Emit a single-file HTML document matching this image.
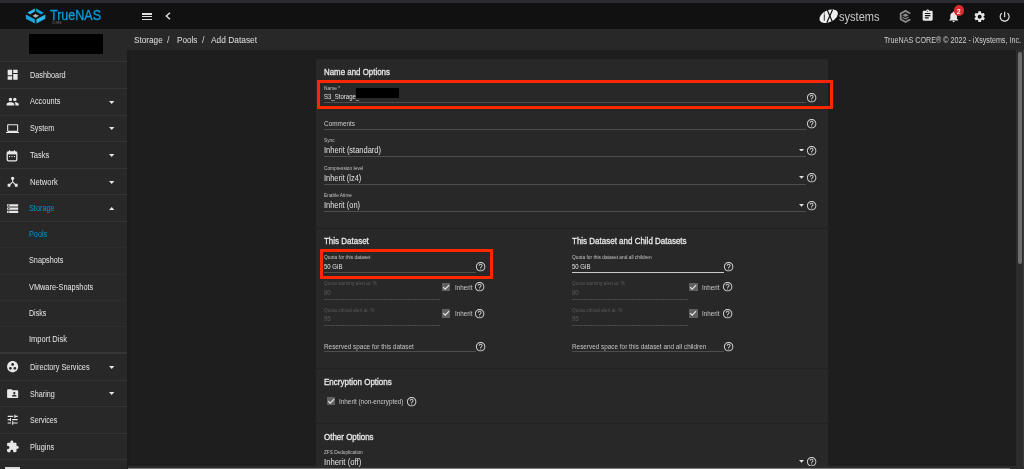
<!DOCTYPE html>
<html><head><meta charset="utf-8"><style>
html,body{margin:0;padding:0;width:1024px;height:469px;overflow:hidden;background:#1e1e1e;font-family:"Liberation Sans", sans-serif;}
</style></head><body>
<div style="position:relative;width:1024px;height:469px;overflow:hidden;will-change:transform">
<div style="position:absolute;left:0px;top:0px;width:1024px;height:469px;background:#1e1e1e;"></div>
<div style="position:absolute;left:0px;top:0px;width:1024px;height:2.6px;background:#2b2a33;"></div>
<div style="position:absolute;left:0px;top:2.6px;width:1024px;height:26.4px;background:#111111;"></div>
<div style="position:absolute;left:0px;top:29px;width:127px;height:440px;background:#282828;"></div>
<div style="position:absolute;left:127px;top:29px;width:897px;height:21px;background:#282828;"></div>
<svg style="position:absolute;left:24px;top:6px;" width="24" height="20" viewBox="0 0 24 20"><polygon fill="#31b7ea" points="3.4,6.6 10.9,2.6 10.9,5.5 6,8.5"/><polygon fill="#0ea0dc" points="12.1,2.6 19.8,6.8 17,8.5 12.1,5.5"/><polygon fill="#19a3df" points="1.9,8.5 10.9,13.2 10.9,17.5 1.9,12.8"/><polygon fill="#2bb6ee" points="12.4,13.2 21.3,8.5 21.3,12.8 12.4,17.5"/><polygon fill="#b0b0b0" points="8.5,9.8 11.5,7.9 15.1,9.8 11.5,11.7"/></svg>
<div style="position:absolute;left:142px;top:13.3px;width:10px;height:1.3px;background:#e0e0e0;"></div>
<div style="position:absolute;left:142px;top:16.0px;width:10px;height:1.3px;background:#e0e0e0;"></div>
<div style="position:absolute;left:142px;top:18.7px;width:10px;height:1.3px;background:#e0e0e0;"></div>
<svg style="position:absolute;left:164px;top:11px;" width="8" height="10" viewBox="0 0 8 10"><path d="M6 1.8 L2.3 5 L6 8.2" fill="none" stroke="#e0e0e0" stroke-width="1.4"/></svg>
<svg style="position:absolute;left:816px;top:6px;" width="30" height="20" viewBox="0 0 30 20"><ellipse cx="12.7" cy="10.2" rx="9.9" ry="5.9" transform="rotate(-25 12.7 10.2)" fill="#f0f0f0"/><line x1="8.3" y1="8.4" x2="8.3" y2="14.7" stroke="#111" stroke-width="0.9"/><rect x="7.85" y="6.6" width="0.9" height="0.9" fill="#111"/><line x1="11.3" y1="4.0" x2="16.3" y2="15.7" stroke="#111" stroke-width="1.2"/><line x1="16.5" y1="3.7" x2="10.9" y2="16.6" stroke="#111" stroke-width="1.2"/></svg>
<svg style="position:absolute;left:899px;top:9px;" width="15" height="15" viewBox="0 0 15 15"><path d="M6.5 0.8 L12 3.9 L10.3 5 L6.5 2.9 L2.6 5.1 V9.7 L6.5 11.9 L10.3 9.8 L12 10.9 L6.5 14 L0.8 10.8 V4 Z" fill="#8c8c8c"/><path d="M6.5 4.6 L9.6 6.3 L6.5 8 L3.4 6.3 Z M3.4 7.6 L6.5 9.3 L9.6 7.6 L9.6 8.8 L6.5 10.5 L3.4 8.8Z" fill="#8c8c8c"/></svg>
<svg style="position:absolute;left:921.35px;top:9.35px;" width="13.3" height="13.3" viewBox="0 0 24 24"><path fill="#e8e8e8" d="M19 3h-4.18C14.4 1.84 13.3 1 12 1c-1.3 0-2.4.84-2.82 2H5c-1.1 0-2 .9-2 2v14c0 1.1.9 2 2 2h14c1.1 0 2-.9 2-2V5c0-1.1-.9-2-2-2zm-7 0c.55 0 1 .45 1 1s-.45 1-1 1-1-.45-1-1 .45-1 1-1zm2 14H7v-2h7v2zm3-4H7v-2h10v2zm0-4H7V7h10v2z"/></svg>
<svg style="position:absolute;left:946.85px;top:9.85px;" width="13.3" height="13.3" viewBox="0 0 24 24"><path fill="#e8e8e8" d="M12 22c1.1 0 2-.9 2-2h-4c0 1.1.89 2 2 2zm6-6v-5c0-3.07-1.64-5.64-4.5-6.32V4c0-.83-.67-1.5-1.5-1.5s-1.5.67-1.5 1.5v.68C7.63 5.36 6 7.92 6 11v5l-2 2v1h16v-1l-2-2z"/></svg>
<div style="position:absolute;left:953.7px;top:5.2px;width:10.5px;height:10.5px;border-radius:50%;background:#d32f2f"></div>
<svg style="position:absolute;left:972.5500000000001px;top:10.15px;" width="13.3" height="13.3" viewBox="0 0 24 24"><path fill="#e8e8e8" d="M19.14 12.94c.04-.3.06-.61.06-.94 0-.32-.02-.64-.07-.94l2.03-1.58c.18-.14.23-.41.12-.61l-1.92-3.32c-.12-.22-.37-.29-.59-.22l-2.39.96c-.5-.38-1.03-.7-1.62-.94l-.36-2.54c-.04-.24-.24-.41-.48-.41h-3.84c-.24 0-.43.17-.47.41l-.36 2.54c-.59.24-1.13.57-1.62.94l-2.39-.96c-.22-.08-.47 0-.59.22L2.74 8.87c-.12.21-.08.47.12.61l2.03 1.58c-.05.3-.09.63-.09.94s.02.64.07.94l-2.03 1.58c-.18.14-.23.41-.12.61l1.92 3.32c.12.22.37.29.59.22l2.39-.96c.5.38 1.030.7 1.62.94l.36 2.54c.05.24.24.41.48.41h3.84c.24 0 .44-.17.47-.41l.36-2.54c.59-.24 1.13-.56 1.62-.94l2.39.96c.22.08.47 0 .59-.22l1.92-3.32c.12-.22.07-.47-.12-.61l-2.01-1.58zM12 15.6c-1.98 0-3.6-1.62-3.6-3.6s1.62-3.6 3.6-3.6 3.6 1.62 3.6 3.6-1.62 3.6-3.6 3.6z"/></svg>
<svg style="position:absolute;left:998.15px;top:10.049999999999999px;" width="13.3" height="13.3" viewBox="0 0 24 24"><path fill="#e8e8e8" d="M13 3h-2v10h2V3zm4.83 2.17l-1.42 1.42C17.99 7.86 19 9.81 19 12c0 3.87-3.13 7-7 7s-7-3.13-7-7c0-2.19 1.01-4.14 2.58-5.42L6.17 5.17C4.23 6.82 3 9.26 3 12c0 4.97 4.03 9 9 9s9-4.03 9-9c0-2.74-1.23-5.18-3.17-6.83z"/></svg>
<div style="position:absolute;left:29.3px;top:33.8px;width:74.2px;height:20px;background:#000000;"></div>
<div style="position:absolute;left:0px;top:61.2px;width:127px;height:1px;background:#333333;"></div>
<div style="position:absolute;left:0px;top:87.8px;width:127px;height:1px;background:#333333;"></div>
<div style="position:absolute;left:0px;top:114.5px;width:127px;height:1px;background:#333333;"></div>
<div style="position:absolute;left:0px;top:141.1px;width:127px;height:1px;background:#333333;"></div>
<div style="position:absolute;left:0px;top:167.7px;width:127px;height:1px;background:#333333;"></div>
<div style="position:absolute;left:0px;top:194.4px;width:127px;height:1px;background:#333333;"></div>
<div style="position:absolute;left:0px;top:221.0px;width:127px;height:1px;background:#333333;"></div>
<div style="position:absolute;left:0px;top:247.2px;width:127px;height:1px;background:#2d2d2d;"></div>
<div style="position:absolute;left:0px;top:273.6px;width:127px;height:1px;background:#2d2d2d;"></div>
<div style="position:absolute;left:0px;top:299.5px;width:127px;height:1px;background:#2d2d2d;"></div>
<div style="position:absolute;left:0px;top:326.0px;width:127px;height:1px;background:#2d2d2d;"></div>
<div style="position:absolute;left:0px;top:352.2px;width:127px;height:2px;background:#363636;"></div>
<div style="position:absolute;left:0px;top:379.5px;width:127px;height:1px;background:#333333;"></div>
<div style="position:absolute;left:0px;top:406.3px;width:127px;height:1px;background:#333333;"></div>
<div style="position:absolute;left:0px;top:432.7px;width:127px;height:1px;background:#333333;"></div>
<div style="position:absolute;left:0px;top:459.2px;width:127px;height:1px;background:#333333;"></div>
<div style="position:absolute;left:127px;top:50px;width:1.5px;height:419px;background:#1b1b1b;"></div>
<svg style="position:absolute;left:5.549999999999999px;top:68.35px;" width="13.3" height="13.3" viewBox="0 0 24 24"><path fill="#e8e8e8" d="M3 13h8V3H3v10zm0 8h8v-6H3v6zm10 0h8V11h-8v10zm0-18v6h8V3h-8z"/></svg>
<svg style="position:absolute;left:5.549999999999999px;top:95.05px;" width="13.3" height="13.3" viewBox="0 0 24 24"><path fill="#e8e8e8" d="M16 11c1.66 0 2.99-1.34 2.99-3S17.66 5 16 5c-1.66 0-3 1.34-3 3s1.34 3 3 3zm-8 0c1.66 0 2.99-1.34 2.99-3S9.66 5 8 5C6.34 5 5 6.34 5 8s1.34 3 3 3zm0 2c-2.33 0-7 1.17-7 3.5V19h14v-2.5c0-2.33-4.67-3.5-7-3.5zm8 0c-.29 0-.62.02-.97.05 1.16.84 1.97 1.97 1.97 3.45V19h6v-2.5c0-2.33-4.67-3.5-7-3.5z"/></svg>
<svg style="position:absolute;left:109.4px;top:100.60000000000001px;" width="5.4" height="3" viewBox="0 0 5.4 3"><polygon points="0,0 5.4,0 2.7,3" fill="#e6e6e6"/></svg>
<svg style="position:absolute;left:5.549999999999999px;top:121.65px;" width="13.3" height="13.3" viewBox="0 0 24 24"><path fill="#e8e8e8" d="M20 18c1.1 0 1.99-.9 1.99-2L22 6c0-1.1-.9-2-2-2H4c-1.1 0-2 .9-2 2v10c0 1.1.9 2 2 2H0v2h24v-2h-4zM4 6h16v10H4V6z"/></svg>
<svg style="position:absolute;left:109.4px;top:127.20000000000002px;" width="5.4" height="3" viewBox="0 0 5.4 3"><polygon points="0,0 5.4,0 2.7,3" fill="#e6e6e6"/></svg>
<svg style="position:absolute;left:109.4px;top:153.9px;" width="5.4" height="3" viewBox="0 0 5.4 3"><polygon points="0,0 5.4,0 2.7,3" fill="#e6e6e6"/></svg>
<svg style="position:absolute;left:5.549999999999999px;top:174.95px;" width="13.3" height="13.3" viewBox="0 0 24 24"><path fill="#e8e8e8" d="M17 16l-4-4V8.82C14.16 8.4 15 7.3 15 6c0-1.66-1.34-3-3-3S9 4.34 9 6c0 1.3.84 2.4 2 2.82V12l-4 4H3v5h5v-3.05l4-4.2 4 4.2V21h5v-5h-4z"/></svg>
<svg style="position:absolute;left:109.4px;top:180.5px;" width="5.4" height="3" viewBox="0 0 5.4 3"><polygon points="0,0 5.4,0 2.7,3" fill="#e6e6e6"/></svg>
<svg style="position:absolute;left:5.549999999999999px;top:360.15000000000003px;" width="13.3" height="13.3" viewBox="0 0 24 24"><path fill="#e8e8e8" d="M12 2C6.48 2 2 6.48 2 12s4.48 10 10 10 10-4.48 10-10S17.52 2 12 2zM8 17.5c-1.38 0-2.5-1.12-2.5-2.5s1.12-2.5 2.5-2.5 2.5 1.12 2.5 2.5-1.12 2.5-2.5 2.5zM9.5 8c0-1.38 1.12-2.5 2.5-2.5s2.5 1.12 2.5 2.5-1.12 2.5-2.5 2.5S9.5 9.38 9.5 8zm6.5 9.5c-1.38 0-2.5-1.12-2.5-2.5s1.12-2.5 2.5-2.5 2.5 1.12 2.5 2.5-1.12 2.5-2.5 2.5z"/></svg>
<svg style="position:absolute;left:109.4px;top:365.7px;" width="5.4" height="3" viewBox="0 0 5.4 3"><polygon points="0,0 5.4,0 2.7,3" fill="#e6e6e6"/></svg>
<svg style="position:absolute;left:5.549999999999999px;top:386.75px;" width="13.3" height="13.3" viewBox="0 0 24 24"><path fill="#e8e8e8" d="M20 6h-8l-2-2H4c-1.1 0-1.99.9-1.99 2L2 18c0 1.1.9 2 2 2h16c1.1 0 2-.9 2-2V8c0-1.1-.9-2-2-2zm-5 3c1.1 0 2 .9 2 2s-.9 2-2 2-2-.9-2-2 .9-2 2-2zm4 8h-8v-1c0-1.33 2.67-2 4-2s4 .67 4 2v1z"/></svg>
<svg style="position:absolute;left:109.4px;top:392.29999999999995px;" width="5.4" height="3" viewBox="0 0 5.4 3"><polygon points="0,0 5.4,0 2.7,3" fill="#e6e6e6"/></svg>
<svg style="position:absolute;left:5.549999999999999px;top:413.35px;" width="13.3" height="13.3" viewBox="0 0 24 24"><path fill="#e8e8e8" d="M3 17v2h6v-2H3zM3 5v2h10V5H3zm10 16v-2h8v-2h-8v-2h-2v6h2zM7 9v2H3v2h4v2h2V9H7zm14 4v-2H11v2h10zm-6-4h2V7h4V5h-4V3h-2v6z"/></svg>
<svg style="position:absolute;left:5.549999999999999px;top:439.95000000000005px;" width="13.3" height="13.3" viewBox="0 0 24 24"><path fill="#e8e8e8" d="M20.5 11H19V7c0-1.1-.9-2-2-2h-4V3.5C13 2.12 11.88 1 10.5 1S8 2.12 8 3.5V5H4c-1.1 0-1.99.9-1.99 2v3.8H3.5c1.49 0 2.7 1.21 2.7 2.7s-1.21 2.7-2.7 2.7H2V20c0 1.1.9 2 2 2h3.8v-1.5c0-1.49 1.21-2.7 2.7-2.7 1.49 0 2.7 1.21 2.7 2.7V22H17c1.1 0 2-.9 2-2v-4h1.5c1.38 0 2.5-1.12 2.5-2.5S21.88 11 20.5 11z"/></svg>
<svg style="position:absolute;left:6px;top:149.5px;" width="12" height="12" viewBox="0 0 12 12"><rect x="1.2" y="1.8" width="9.6" height="9" rx="1.4" fill="none" stroke="#e8e8e8" stroke-width="1.3"/><rect x="1.2" y="1.8" width="9.6" height="2.6" fill="#e8e8e8"/><rect x="3" y="0.3" width="1.2" height="2" fill="#e8e8e8"/><rect x="7.8" y="0.3" width="1.2" height="2" fill="#e8e8e8"/><rect x="3" y="6" width="1.1" height="1.1" fill="#e8e8e8"/><rect x="5.45" y="6" width="1.1" height="1.1" fill="#e8e8e8"/><rect x="7.9" y="6" width="1.1" height="1.1" fill="#e8e8e8"/></svg>
<svg style="position:absolute;left:5.65px;top:201.75px;" width="13.3" height="13.3" viewBox="0 0 24 24"><path fill="#e8e8e8" d="M2 20h20v-4H2v4zm2-3h2v2H4v-2zM2 4v4h20V4H2zm4 3H4V5h2v2zm-4 7h20v-4H2v4zm2-3h2v2H4v-2z"/></svg>
<svg style="position:absolute;left:109.4px;top:207.1px;" width="5.4" height="3" viewBox="0 0 5.4 3"><polygon points="0,3 2.7,0 5.4,3" fill="#e6e6e6"/></svg>
<div style="position:absolute;left:5px;top:467px;width:15px;height:2px;background:#d8d8d8;"></div>
<div style="position:absolute;left:316px;top:59px;width:512px;height:420px;background:#282828;border-radius:2px"></div>
<div style="position:absolute;left:316px;top:228.0px;width:512px;height:1px;background:#222222;"></div>
<div style="position:absolute;left:316px;top:367.8px;width:512px;height:1px;background:#222222;"></div>
<div style="position:absolute;left:316px;top:422.9px;width:512px;height:1px;background:#222222;"></div>
<div style="position:absolute;left:317px;top:80px;width:510px;height:23px;border:3px solid #ff2600"></div>
<div style="position:absolute;left:356px;top:88px;width:42.5px;height:9.8px;background:#000000;"></div>
<div style="position:absolute;left:324px;top:101.8px;width:482px;height:1px;background:#4e4e4e;"></div>
<svg style="position:absolute;left:805.85px;top:91.85px;" width="11.3" height="11.3" viewBox="0 0 24 24"><path fill="#cfcfcf" d="M11 18h2v-2h-2v2zm1-16C6.48 2 2 6.48 2 12s4.48 10 10 10 10-4.48 10-10S17.52 2 12 2zm0 18c-4.41 0-8-3.59-8-8s3.59-8 8-8 8 3.59 8 8-3.59 8-8 8zm0-14c-2.21 0-4 1.79-4 4h2c0-1.1.9-2 2-2s2 .9 2 2c0 2-3 1.75-3 5h2c0-2.25 3-2.5 3-5 0-2.21-1.79-4-4-4z"/></svg>
<div style="position:absolute;left:324px;top:128.9px;width:482px;height:1px;background:#4e4e4e;"></div>
<svg style="position:absolute;left:805.85px;top:118.35px;" width="11.3" height="11.3" viewBox="0 0 24 24"><path fill="#cfcfcf" d="M11 18h2v-2h-2v2zm1-16C6.48 2 2 6.48 2 12s4.48 10 10 10 10-4.48 10-10S17.52 2 12 2zm0 18c-4.41 0-8-3.59-8-8s3.59-8 8-8 8 3.59 8 8-3.59 8-8 8zm0-14c-2.21 0-4 1.79-4 4h2c0-1.1.9-2 2-2s2 .9 2 2c0 2-3 1.75-3 5h2c0-2.25 3-2.5 3-5 0-2.21-1.79-4-4-4z"/></svg>
<div style="position:absolute;left:324px;top:156.2px;width:482px;height:1px;background:#4e4e4e;"></div>
<svg style="position:absolute;left:798.9px;top:148.7px;" width="5" height="2.8" viewBox="0 0 5 2.8"><polygon points="0,0 5,0 2.5,2.8" fill="#e0e0e0"/></svg>
<svg style="position:absolute;left:805.75px;top:144.75px;" width="11.3" height="11.3" viewBox="0 0 24 24"><path fill="#cfcfcf" d="M11 18h2v-2h-2v2zm1-16C6.48 2 2 6.48 2 12s4.48 10 10 10 10-4.48 10-10S17.52 2 12 2zm0 18c-4.41 0-8-3.59-8-8s3.59-8 8-8 8 3.59 8 8-3.59 8-8 8zm0-14c-2.21 0-4 1.79-4 4h2c0-1.1.9-2 2-2s2 .9 2 2c0 2-3 1.75-3 5h2c0-2.25 3-2.5 3-5 0-2.21-1.79-4-4-4z"/></svg>
<div style="position:absolute;left:324px;top:183.8px;width:482px;height:1px;background:#4e4e4e;"></div>
<svg style="position:absolute;left:798.9px;top:176.29999999999998px;" width="5" height="2.8" viewBox="0 0 5 2.8"><polygon points="0,0 5,0 2.5,2.8" fill="#e0e0e0"/></svg>
<svg style="position:absolute;left:805.75px;top:172.35px;" width="11.3" height="11.3" viewBox="0 0 24 24"><path fill="#cfcfcf" d="M11 18h2v-2h-2v2zm1-16C6.48 2 2 6.48 2 12s4.48 10 10 10 10-4.48 10-10S17.52 2 12 2zm0 18c-4.41 0-8-3.59-8-8s3.59-8 8-8 8 3.59 8 8-3.59 8-8 8zm0-14c-2.21 0-4 1.79-4 4h2c0-1.1.9-2 2-2s2 .9 2 2c0 2-3 1.75-3 5h2c0-2.25 3-2.5 3-5 0-2.21-1.79-4-4-4z"/></svg>
<div style="position:absolute;left:324px;top:211.0px;width:482px;height:1px;background:#4e4e4e;"></div>
<svg style="position:absolute;left:798.9px;top:204.1px;" width="5" height="2.8" viewBox="0 0 5 2.8"><polygon points="0,0 5,0 2.5,2.8" fill="#e0e0e0"/></svg>
<svg style="position:absolute;left:805.75px;top:200.15px;" width="11.3" height="11.3" viewBox="0 0 24 24"><path fill="#cfcfcf" d="M11 18h2v-2h-2v2zm1-16C6.48 2 2 6.48 2 12s4.48 10 10 10 10-4.48 10-10S17.52 2 12 2zm0 18c-4.41 0-8-3.59-8-8s3.59-8 8-8 8 3.59 8 8-3.59 8-8 8zm0-14c-2.21 0-4 1.79-4 4h2c0-1.1.9-2 2-2s2 .9 2 2c0 2-3 1.75-3 5h2c0-2.25 3-2.5 3-5 0-2.21-1.79-4-4-4z"/></svg>
<div style="position:absolute;left:320px;top:249px;width:167px;height:24px;border:3px solid #ff2600"></div>
<div style="position:absolute;left:324.0px;top:271.9px;width:151.60000000000002px;height:1px;background:#4e4e4e;"></div>
<svg style="position:absolute;left:475.35px;top:261.45000000000005px;" width="11.3" height="11.3" viewBox="0 0 24 24"><path fill="#cfcfcf" d="M11 18h2v-2h-2v2zm1-16C6.48 2 2 6.48 2 12s4.48 10 10 10 10-4.48 10-10S17.52 2 12 2zm0 18c-4.41 0-8-3.59-8-8s3.59-8 8-8 8 3.59 8 8-3.59 8-8 8zm0-14c-2.21 0-4 1.79-4 4h2c0-1.1.9-2 2-2s2 .9 2 2c0 2-3 1.75-3 5h2c0-2.25 3-2.5 3-5 0-2.21-1.79-4-4-4z"/></svg>
<div style="position:absolute;left:324.0px;top:298.5px;width:116.0px;height:1px;background:repeating-linear-gradient(90deg,#4a4a4a 0 2px,#383838 2px 3px)"></div>
<div style="position:absolute;left:442px;top:283px;width:8.3px;height:8.3px;background:#606060"></div>
<svg style="position:absolute;left:442px;top:283px;" width="8.3" height="8.3" viewBox="0 0 8.3 8.3"><path d="M1.2 4.1 L3.2 6.1 L7.1 2.2" fill="none" stroke="#e8e8e8" stroke-width="1.15"/></svg>
<svg style="position:absolute;left:474.35px;top:281.35px;" width="11.3" height="11.3" viewBox="0 0 24 24"><path fill="#cfcfcf" d="M11 18h2v-2h-2v2zm1-16C6.48 2 2 6.48 2 12s4.48 10 10 10 10-4.48 10-10S17.52 2 12 2zm0 18c-4.41 0-8-3.59-8-8s3.59-8 8-8 8 3.59 8 8-3.59 8-8 8zm0-14c-2.21 0-4 1.79-4 4h2c0-1.1.9-2 2-2s2 .9 2 2c0 2-3 1.75-3 5h2c0-2.25 3-2.5 3-5 0-2.21-1.79-4-4-4z"/></svg>
<div style="position:absolute;left:324.0px;top:325.0px;width:116.0px;height:1px;background:repeating-linear-gradient(90deg,#4a4a4a 0 2px,#383838 2px 3px)"></div>
<div style="position:absolute;left:442px;top:309.3px;width:8.3px;height:8.3px;background:#606060"></div>
<svg style="position:absolute;left:442px;top:309.3px;" width="8.3" height="8.3" viewBox="0 0 8.3 8.3"><path d="M1.2 4.1 L3.2 6.1 L7.1 2.2" fill="none" stroke="#e8e8e8" stroke-width="1.15"/></svg>
<svg style="position:absolute;left:474.35px;top:307.85px;" width="11.3" height="11.3" viewBox="0 0 24 24"><path fill="#cfcfcf" d="M11 18h2v-2h-2v2zm1-16C6.48 2 2 6.48 2 12s4.48 10 10 10 10-4.48 10-10S17.52 2 12 2zm0 18c-4.41 0-8-3.59-8-8s3.59-8 8-8 8 3.59 8 8-3.59 8-8 8zm0-14c-2.21 0-4 1.79-4 4h2c0-1.1.9-2 2-2s2 .9 2 2c0 2-3 1.75-3 5h2c0-2.25 3-2.5 3-5 0-2.21-1.79-4-4-4z"/></svg>
<div style="position:absolute;left:572.0px;top:271.75px;width:151.60000000000002px;height:1.3px;background:#c8c8c8;"></div>
<svg style="position:absolute;left:722.75px;top:261.45000000000005px;" width="11.3" height="11.3" viewBox="0 0 24 24"><path fill="#cfcfcf" d="M11 18h2v-2h-2v2zm1-16C6.48 2 2 6.48 2 12s4.48 10 10 10 10-4.48 10-10S17.52 2 12 2zm0 18c-4.41 0-8-3.59-8-8s3.59-8 8-8 8 3.59 8 8-3.59 8-8 8zm0-14c-2.21 0-4 1.79-4 4h2c0-1.1.9-2 2-2s2 .9 2 2c0 2-3 1.75-3 5h2c0-2.25 3-2.5 3-5 0-2.21-1.79-4-4-4z"/></svg>
<div style="position:absolute;left:572.0px;top:298.5px;width:116.0px;height:1px;background:repeating-linear-gradient(90deg,#4a4a4a 0 2px,#383838 2px 3px)"></div>
<div style="position:absolute;left:689.4px;top:283px;width:8.3px;height:8.3px;background:#606060"></div>
<svg style="position:absolute;left:689.4px;top:283px;" width="8.3" height="8.3" viewBox="0 0 8.3 8.3"><path d="M1.2 4.1 L3.2 6.1 L7.1 2.2" fill="none" stroke="#e8e8e8" stroke-width="1.15"/></svg>
<svg style="position:absolute;left:721.75px;top:281.35px;" width="11.3" height="11.3" viewBox="0 0 24 24"><path fill="#cfcfcf" d="M11 18h2v-2h-2v2zm1-16C6.48 2 2 6.48 2 12s4.48 10 10 10 10-4.48 10-10S17.52 2 12 2zm0 18c-4.41 0-8-3.59-8-8s3.59-8 8-8 8 3.59 8 8-3.59 8-8 8zm0-14c-2.21 0-4 1.79-4 4h2c0-1.1.9-2 2-2s2 .9 2 2c0 2-3 1.75-3 5h2c0-2.25 3-2.5 3-5 0-2.21-1.79-4-4-4z"/></svg>
<div style="position:absolute;left:572.0px;top:325.0px;width:116.0px;height:1px;background:repeating-linear-gradient(90deg,#4a4a4a 0 2px,#383838 2px 3px)"></div>
<div style="position:absolute;left:689.4px;top:309.3px;width:8.3px;height:8.3px;background:#606060"></div>
<svg style="position:absolute;left:689.4px;top:309.3px;" width="8.3" height="8.3" viewBox="0 0 8.3 8.3"><path d="M1.2 4.1 L3.2 6.1 L7.1 2.2" fill="none" stroke="#e8e8e8" stroke-width="1.15"/></svg>
<svg style="position:absolute;left:721.75px;top:307.85px;" width="11.3" height="11.3" viewBox="0 0 24 24"><path fill="#cfcfcf" d="M11 18h2v-2h-2v2zm1-16C6.48 2 2 6.48 2 12s4.48 10 10 10 10-4.48 10-10S17.52 2 12 2zm0 18c-4.41 0-8-3.59-8-8s3.59-8 8-8 8 3.59 8 8-3.59 8-8 8zm0-14c-2.21 0-4 1.79-4 4h2c0-1.1.9-2 2-2s2 .9 2 2c0 2-3 1.75-3 5h2c0-2.25 3-2.5 3-5 0-2.21-1.79-4-4-4z"/></svg>
<div style="position:absolute;left:324px;top:351.4px;width:151.5px;height:1px;background:#4e4e4e;"></div>
<svg style="position:absolute;left:475.35px;top:341.35px;" width="11.3" height="11.3" viewBox="0 0 24 24"><path fill="#cfcfcf" d="M11 18h2v-2h-2v2zm1-16C6.48 2 2 6.48 2 12s4.48 10 10 10 10-4.48 10-10S17.52 2 12 2zm0 18c-4.41 0-8-3.59-8-8s3.59-8 8-8 8 3.59 8 8-3.59 8-8 8zm0-14c-2.21 0-4 1.79-4 4h2c0-1.1.9-2 2-2s2 .9 2 2c0 2-3 1.75-3 5h2c0-2.25 3-2.5 3-5 0-2.21-1.79-4-4-4z"/></svg>
<div style="position:absolute;left:572px;top:351.4px;width:151.5px;height:1px;background:#4e4e4e;"></div>
<svg style="position:absolute;left:722.95px;top:341.35px;" width="11.3" height="11.3" viewBox="0 0 24 24"><path fill="#cfcfcf" d="M11 18h2v-2h-2v2zm1-16C6.48 2 2 6.48 2 12s4.48 10 10 10 10-4.48 10-10S17.52 2 12 2zm0 18c-4.41 0-8-3.59-8-8s3.59-8 8-8 8 3.59 8 8-3.59 8-8 8zm0-14c-2.21 0-4 1.79-4 4h2c0-1.1.9-2 2-2s2 .9 2 2c0 2-3 1.75-3 5h2c0-2.25 3-2.5 3-5 0-2.21-1.79-4-4-4z"/></svg>
<div style="position:absolute;left:326.7px;top:397.2px;width:8.3px;height:8.3px;background:#606060"></div>
<svg style="position:absolute;left:326.7px;top:397.2px;" width="8.3" height="8.3" viewBox="0 0 8.3 8.3"><path d="M1.2 4.1 L3.2 6.1 L7.1 2.2" fill="none" stroke="#e8e8e8" stroke-width="1.15"/></svg>
<svg style="position:absolute;left:405.85px;top:395.85px;" width="11.3" height="11.3" viewBox="0 0 24 24"><path fill="#cfcfcf" d="M11 18h2v-2h-2v2zm1-16C6.48 2 2 6.48 2 12s4.48 10 10 10 10-4.48 10-10S17.52 2 12 2zm0 18c-4.41 0-8-3.59-8-8s3.59-8 8-8 8 3.59 8 8-3.59 8-8 8zm0-14c-2.21 0-4 1.79-4 4h2c0-1.1.9-2 2-2s2 .9 2 2c0 2-3 1.75-3 5h2c0-2.25 3-2.5 3-5 0-2.21-1.79-4-4-4z"/></svg>
<svg style="position:absolute;left:798.9px;top:460.0px;" width="5" height="2.8" viewBox="0 0 5 2.8"><polygon points="0,0 5,0 2.5,2.8" fill="#e0e0e0"/></svg>
<svg style="position:absolute;left:805.75px;top:456.15000000000003px;" width="11.3" height="11.3" viewBox="0 0 24 24"><path fill="#cfcfcf" d="M11 18h2v-2h-2v2zm1-16C6.48 2 2 6.48 2 12s4.48 10 10 10 10-4.48 10-10S17.52 2 12 2zm0 18c-4.41 0-8-3.59-8-8s3.59-8 8-8 8 3.59 8 8-3.59 8-8 8zm0-14c-2.21 0-4 1.79-4 4h2c0-1.1.9-2 2-2s2 .9 2 2c0 2-3 1.75-3 5h2c0-2.25 3-2.5 3-5 0-2.21-1.79-4-4-4z"/></svg>
<div style="position:absolute;left:1016px;top:50px;width:8px;height:416px;background:#2c2c2c;"></div>
<div style="position:absolute;left:1023px;top:50px;width:1px;height:416px;background:#3a3a3a;"></div>
<div style="position:absolute;left:1018px;top:52px;width:4.3px;height:212px;border-radius:2.2px;background:#6e6e6e"></div>
<div style="position:absolute;left:128px;top:465.6px;width:896px;height:3.4px;background:#2c2c2c;"></div>
<div style="position:absolute;left:128px;top:467.6px;width:882px;height:1.4px;background:#7a7a7a;"></div>
<div style="position:absolute;left:50px;top:6.72px;font-size:15.1px;line-height:15.1px;font-weight:400;color:#0b98d6;white-space:pre;transform:scaleX(0.8291);transform-origin:0 0;-webkit-text-stroke:0.35px #0b98d6;">TrueNAS</div>
<div style="position:absolute;left:52px;top:21.65px;font-size:3.6px;line-height:3.6px;font-weight:400;color:#7a7a7a;white-space:pre;transform:scaleX(0.9335);transform-origin:0 0;">CORE</div>
<div style="position:absolute;left:838.5px;top:10.89px;font-size:12.3px;line-height:12.3px;font-weight:400;color:#c8c8c8;white-space:pre;transform:scaleX(0.8981);transform-origin:0 0;">systems</div>
<div style="position:absolute;left:956.8px;top:7.97px;font-size:7px;line-height:7px;font-weight:700;color:#ffffff;white-space:pre;">2</div>
<div style="position:absolute;left:133.5px;top:35.80px;font-size:9.1px;line-height:9.1px;font-weight:400;color:#e0e0e0;white-space:pre;transform:scaleX(0.9008);transform-origin:0 0;">Storage</div>
<div style="position:absolute;left:167px;top:35.80px;font-size:9.1px;line-height:9.1px;font-weight:400;color:#cfcfcf;white-space:pre;">/</div>
<div style="position:absolute;left:176.6px;top:35.80px;font-size:9.1px;line-height:9.1px;font-weight:400;color:#e0e0e0;white-space:pre;transform:scaleX(0.8967);transform-origin:0 0;">Pools</div>
<div style="position:absolute;left:202px;top:35.80px;font-size:9.1px;line-height:9.1px;font-weight:400;color:#cfcfcf;white-space:pre;">/</div>
<div style="position:absolute;left:211.2px;top:35.80px;font-size:9.1px;line-height:9.1px;font-weight:400;color:#e0e0e0;white-space:pre;transform:scaleX(0.9211);transform-origin:0 0;">Add Dataset</div>
<div style="position:absolute;left:884px;top:35.99px;font-size:8.4px;line-height:8.4px;font-weight:400;color:#d0d0d0;white-space:pre;transform:scaleX(0.8560);transform-origin:0 0;">TrueNAS CORE® © 2022 - iXsystems, Inc.</div>
<div style="position:absolute;left:29.7px;top:70.67px;font-size:8.3px;line-height:8.3px;font-weight:400;color:#e6e6e6;white-space:pre;transform:scaleX(0.8770);transform-origin:0 0;">Dashboard</div>
<div style="position:absolute;left:29.7px;top:97.27px;font-size:8.3px;line-height:8.3px;font-weight:400;color:#e6e6e6;white-space:pre;transform:scaleX(0.8904);transform-origin:0 0;">Accounts</div>
<div style="position:absolute;left:29.7px;top:124.17px;font-size:8.3px;line-height:8.3px;font-weight:400;color:#e6e6e6;white-space:pre;transform:scaleX(0.8781);transform-origin:0 0;">System</div>
<div style="position:absolute;left:29.7px;top:150.67px;font-size:8.3px;line-height:8.3px;font-weight:400;color:#e6e6e6;white-space:pre;transform:scaleX(0.9049);transform-origin:0 0;">Tasks</div>
<div style="position:absolute;left:29.7px;top:177.67px;font-size:8.3px;line-height:8.3px;font-weight:400;color:#e6e6e6;white-space:pre;transform:scaleX(0.9133);transform-origin:0 0;">Network</div>
<div style="position:absolute;left:29.7px;top:362.67px;font-size:8.3px;line-height:8.3px;font-weight:400;color:#e6e6e6;white-space:pre;transform:scaleX(0.8854);transform-origin:0 0;">Directory Services</div>
<div style="position:absolute;left:29.7px;top:389.67px;font-size:8.3px;line-height:8.3px;font-weight:400;color:#e6e6e6;white-space:pre;transform:scaleX(0.8703);transform-origin:0 0;">Sharing</div>
<div style="position:absolute;left:29.7px;top:416.07px;font-size:8.3px;line-height:8.3px;font-weight:400;color:#e6e6e6;white-space:pre;transform:scaleX(0.8609);transform-origin:0 0;">Services</div>
<div style="position:absolute;left:29.7px;top:442.57px;font-size:8.3px;line-height:8.3px;font-weight:400;color:#e6e6e6;white-space:pre;transform:scaleX(0.8928);transform-origin:0 0;">Plugins</div>
<div style="position:absolute;left:29.4px;top:204.17px;font-size:8.3px;line-height:8.3px;font-weight:400;color:#0095d5;white-space:pre;transform:scaleX(0.8809);transform-origin:0 0;">Storage</div>
<div style="position:absolute;left:28.7px;top:230.17px;font-size:8.3px;line-height:8.3px;font-weight:400;color:#0095d5;white-space:pre;transform:scaleX(0.8764);transform-origin:0 0;">Pools</div>
<div style="position:absolute;left:28.7px;top:256.17px;font-size:8.3px;line-height:8.3px;font-weight:400;color:#e6e6e6;white-space:pre;transform:scaleX(0.8771);transform-origin:0 0;">Snapshots</div>
<div style="position:absolute;left:28.7px;top:282.67px;font-size:8.3px;line-height:8.3px;font-weight:400;color:#e6e6e6;white-space:pre;transform:scaleX(0.8880);transform-origin:0 0;">VMware-Snapshots</div>
<div style="position:absolute;left:28.7px;top:308.57px;font-size:8.3px;line-height:8.3px;font-weight:400;color:#e6e6e6;white-space:pre;transform:scaleX(0.8530);transform-origin:0 0;">Disks</div>
<div style="position:absolute;left:28.7px;top:334.97px;font-size:8.3px;line-height:8.3px;font-weight:400;color:#e6e6e6;white-space:pre;transform:scaleX(0.9034);transform-origin:0 0;">Import Disk</div>
<div style="position:absolute;left:324.3px;top:67.59px;font-size:8.4px;line-height:8.4px;font-weight:400;color:#e8e8e8;white-space:pre;transform:scaleX(0.9435);transform-origin:0 0;-webkit-text-stroke:0.3px #e8e8e8;">Name and Options</div>
<div style="position:absolute;left:324.3px;top:85.51px;font-size:5.3px;line-height:5.3px;font-weight:400;color:#c4c4c4;white-space:pre;transform:scaleX(0.9054);transform-origin:0 0;">Name *</div>
<div style="position:absolute;left:324.3px;top:92.84px;font-size:8.1px;line-height:8.1px;font-weight:400;color:#e2e2e2;white-space:pre;transform:scaleX(0.7447);transform-origin:0 0;">S3_Storage_</div>
<div style="position:absolute;left:324.4px;top:120.79px;font-size:7.1px;line-height:7.1px;font-weight:400;color:#cccccc;white-space:pre;transform:scaleX(0.9039);transform-origin:0 0;">Comments</div>
<div style="position:absolute;left:324.3px;top:138.41px;font-size:5.3px;line-height:5.3px;font-weight:400;color:#c4c4c4;white-space:pre;transform:scaleX(0.8912);transform-origin:0 0;">Sync</div>
<div style="position:absolute;left:324.3px;top:146.47px;font-size:8.3px;line-height:8.3px;font-weight:400;color:#e2e2e2;white-space:pre;transform:scaleX(0.9021);transform-origin:0 0;">Inherit (standard)</div>
<div style="position:absolute;left:324.3px;top:166.21px;font-size:5.3px;line-height:5.3px;font-weight:400;color:#c4c4c4;white-space:pre;transform:scaleX(0.9018);transform-origin:0 0;">Compression level</div>
<div style="position:absolute;left:324.3px;top:173.67px;font-size:8.3px;line-height:8.3px;font-weight:400;color:#e2e2e2;white-space:pre;transform:scaleX(0.8988);transform-origin:0 0;">Inherit (lz4)</div>
<div style="position:absolute;left:324.3px;top:193.21px;font-size:5.3px;line-height:5.3px;font-weight:400;color:#c4c4c4;white-space:pre;transform:scaleX(0.8969);transform-origin:0 0;">Enable Atime</div>
<div style="position:absolute;left:324.3px;top:200.97px;font-size:8.3px;line-height:8.3px;font-weight:400;color:#e2e2e2;white-space:pre;transform:scaleX(0.8972);transform-origin:0 0;">Inherit (on)</div>
<div style="position:absolute;left:324.3px;top:237.49px;font-size:8.4px;line-height:8.4px;font-weight:400;color:#e8e8e8;white-space:pre;transform:scaleX(0.9529);transform-origin:0 0;-webkit-text-stroke:0.3px #e8e8e8;">This Dataset</div>
<div style="position:absolute;left:572.1px;top:237.49px;font-size:8.4px;line-height:8.4px;font-weight:400;color:#e8e8e8;white-space:pre;transform:scaleX(0.9541);transform-origin:0 0;-webkit-text-stroke:0.3px #e8e8e8;">This Dataset and Child Datasets</div>
<div style="position:absolute;left:324.3px;top:255.21px;font-size:5.3px;line-height:5.3px;font-weight:400;color:#c4c4c4;white-space:pre;transform:scaleX(0.9160);transform-origin:0 0;">Quota for this dataset</div>
<div style="position:absolute;left:324.3px;top:262.90px;font-size:7.8px;line-height:7.8px;font-weight:400;color:#e2e2e2;white-space:pre;transform:scaleX(0.7717);transform-origin:0 0;">50 GiB</div>
<div style="position:absolute;left:324.3px;top:281.41px;font-size:5.3px;line-height:5.3px;font-weight:400;color:#5a5a5a;white-space:pre;transform:scaleX(0.8866);transform-origin:0 0;">Quota warning alert at, %</div>
<div style="position:absolute;left:324.3px;top:289.30px;font-size:7.8px;line-height:7.8px;font-weight:400;color:#5a5a5a;white-space:pre;transform:scaleX(0.7597);transform-origin:0 0;">80</div>
<div style="position:absolute;left:454.6px;top:284.74px;font-size:6.8px;line-height:6.8px;font-weight:400;color:#c8c8c8;white-space:pre;transform:scaleX(0.9211);transform-origin:0 0;">Inherit</div>
<div style="position:absolute;left:324.3px;top:308.01px;font-size:5.3px;line-height:5.3px;font-weight:400;color:#5a5a5a;white-space:pre;transform:scaleX(0.8980);transform-origin:0 0;">Quota critical alert at, %</div>
<div style="position:absolute;left:324.3px;top:315.40px;font-size:7.8px;line-height:7.8px;font-weight:400;color:#5a5a5a;white-space:pre;transform:scaleX(0.7597);transform-origin:0 0;">95</div>
<div style="position:absolute;left:454.6px;top:311.04px;font-size:6.8px;line-height:6.8px;font-weight:400;color:#c8c8c8;white-space:pre;transform:scaleX(0.9211);transform-origin:0 0;">Inherit</div>
<div style="position:absolute;left:572.3px;top:255.21px;font-size:5.3px;line-height:5.3px;font-weight:400;color:#c4c4c4;white-space:pre;transform:scaleX(0.9083);transform-origin:0 0;">Quota for this dataset and all children</div>
<div style="position:absolute;left:572.3px;top:262.90px;font-size:7.8px;line-height:7.8px;font-weight:400;color:#e2e2e2;white-space:pre;transform:scaleX(0.7717);transform-origin:0 0;">50 GiB</div>
<div style="position:absolute;left:572.3px;top:281.41px;font-size:5.3px;line-height:5.3px;font-weight:400;color:#5a5a5a;white-space:pre;transform:scaleX(0.8866);transform-origin:0 0;">Quota warning alert at, %</div>
<div style="position:absolute;left:572.3px;top:289.30px;font-size:7.8px;line-height:7.8px;font-weight:400;color:#5a5a5a;white-space:pre;transform:scaleX(0.7597);transform-origin:0 0;">80</div>
<div style="position:absolute;left:702.0px;top:284.74px;font-size:6.8px;line-height:6.8px;font-weight:400;color:#c8c8c8;white-space:pre;transform:scaleX(0.9211);transform-origin:0 0;">Inherit</div>
<div style="position:absolute;left:572.3px;top:308.01px;font-size:5.3px;line-height:5.3px;font-weight:400;color:#5a5a5a;white-space:pre;transform:scaleX(0.8980);transform-origin:0 0;">Quota critical alert at, %</div>
<div style="position:absolute;left:572.3px;top:315.40px;font-size:7.8px;line-height:7.8px;font-weight:400;color:#5a5a5a;white-space:pre;transform:scaleX(0.7597);transform-origin:0 0;">95</div>
<div style="position:absolute;left:702.0px;top:311.04px;font-size:6.8px;line-height:6.8px;font-weight:400;color:#c8c8c8;white-space:pre;transform:scaleX(0.9211);transform-origin:0 0;">Inherit</div>
<div style="position:absolute;left:324.4px;top:342.77px;font-size:7.0px;line-height:7.0px;font-weight:400;color:#c4c4c4;white-space:pre;transform:scaleX(0.9121);transform-origin:0 0;">Reserved space for this dataset</div>
<div style="position:absolute;left:572.1px;top:342.77px;font-size:7.0px;line-height:7.0px;font-weight:400;color:#c4c4c4;white-space:pre;transform:scaleX(0.9106);transform-origin:0 0;">Reserved space for this dataset and all children</div>
<div style="position:absolute;left:324.3px;top:378.49px;font-size:8.4px;line-height:8.4px;font-weight:400;color:#e8e8e8;white-space:pre;transform:scaleX(0.9581);transform-origin:0 0;-webkit-text-stroke:0.3px #e8e8e8;">Encryption Options</div>
<div style="position:absolute;left:339.2px;top:398.64px;font-size:6.8px;line-height:6.8px;font-weight:400;color:#c8c8c8;white-space:pre;transform:scaleX(0.9380);transform-origin:0 0;">Inherit (non-encrypted)</div>
<div style="position:absolute;left:324.3px;top:432.59px;font-size:8.4px;line-height:8.4px;font-weight:400;color:#e8e8e8;white-space:pre;transform:scaleX(0.9513);transform-origin:0 0;-webkit-text-stroke:0.3px #e8e8e8;">Other Options</div>
<div style="position:absolute;left:324.3px;top:450.11px;font-size:5.3px;line-height:5.3px;font-weight:400;color:#c4c4c4;white-space:pre;transform:scaleX(0.8881);transform-origin:0 0;">ZFS Deduplication</div>
<div style="position:absolute;left:324.3px;top:457.67px;font-size:8.3px;line-height:8.3px;font-weight:400;color:#e2e2e2;white-space:pre;transform:scaleX(0.9332);transform-origin:0 0;">Inherit (off)</div>
</div></body></html>
